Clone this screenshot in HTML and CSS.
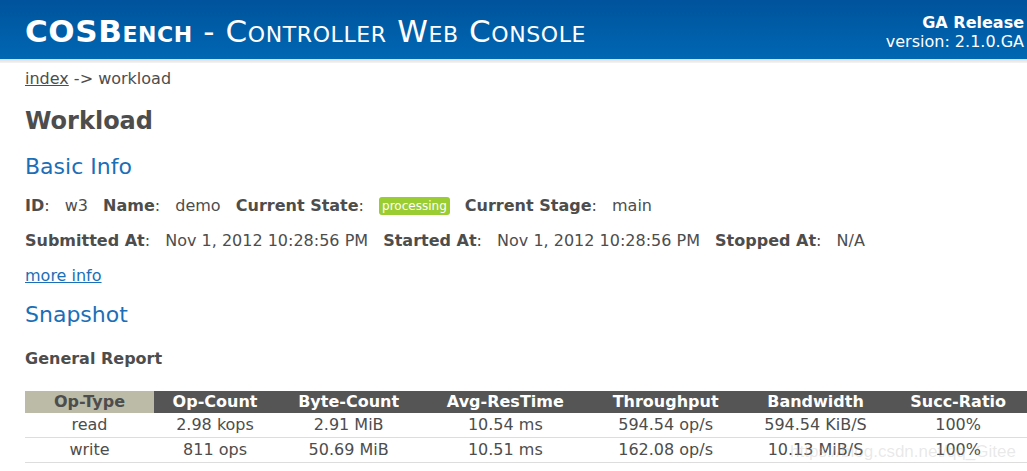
FILE: index.html
```html
<!DOCTYPE html>
<html lang="en">
<head>
  <meta charset="UTF-8">
  <title>COSBench - Controller Web Console</title>
  <link rel="stylesheet" href="styles.css">
</head>
<body>
  <div class="top">
    <div class="title"><span class="brand">COSBench</span> - Controller Web Console</div>
    <div class="release">
      <div class="release-name">GA Release</div>
      <div class="release-ver">version: 2.1.0.GA</div>
    </div>
  </div>
  <div class="top-shadow"></div>
  <div class="content">
    <div class="crumb"><a href="#">index</a> -&gt; workload</div>
    <h1>Workload</h1>
    <h2>Basic Info</h2>
    <div class="info-line">
      <span class="label">ID</span>: <span class="value">w3</span>
      <span class="label">Name</span>: <span class="value">demo</span>
      <span class="label">Current State</span>: <span class="value"><span class="state">processing</span></span>
      <span class="label">Current Stage</span>: <span class="value">main</span>
    </div>
    <div class="info-line">
      <span class="label">Submitted At</span>: <span class="value">Nov 1, 2012 10:28:56 PM</span>
      <span class="label">Started At</span>: <span class="value">Nov 1, 2012 10:28:56 PM</span>
      <span class="label">Stopped At</span>: <span class="value">N/A</span>
    </div>
    <div class="more"><a href="#">more info</a></div>
    <h2 class="snap">Snapshot</h2>
    <h3>General Report</h3>
    <table class="report">
      <thead>
        <tr>
          <th class="first">Op-Type</th>
          <th>Op-Count</th>
          <th>Byte-Count</th>
          <th>Avg-ResTime</th>
          <th>Throughput</th>
          <th>Bandwidth</th>
          <th>Succ-Ratio</th>
        </tr>
      </thead>
      <tbody>
        <tr>
          <td>read</td>
          <td>2.98 kops</td>
          <td>2.91 MiB</td>
          <td>10.54 ms</td>
          <td>594.54 op/s</td>
          <td>594.54 KiB/S</td>
          <td>100%</td>
        </tr>
        <tr>
          <td>write</td>
          <td>811 ops</td>
          <td>50.69 MiB</td>
          <td>10.51 ms</td>
          <td>162.08 op/s</td>
          <td>10.13 MiB/S</td>
          <td>100%</td>
        </tr>
      </tbody>
    </table>
  </div>
  <div class="watermark">https://blog.csdn.net/qq_Gitee</div>
</body>
</html>
```

FILE: styles.css
```css
html, body {
  margin: 0;
  padding: 0;
}
body {
  font-family: 'DejaVu Sans', Verdana, sans-serif;
  font-size: 16px;
  color: #4d4d4d;
  background: #fff;
  overflow: hidden;
  position: relative;
  height: 471px;
}
a {
  color: #4d4d4d;
}
.top {
  height: 59px;
  background: linear-gradient(to bottom, #00539c, #0067b3);
  color: #fff;
  display: flex;
  justify-content: space-between;
  align-items: center;
  padding: 0 3px 0 25px;
}
.title {
  font-size: 31px;
  font-variant: small-caps;
  letter-spacing: 0.6px;
  padding-top: 2px;
}
.title .brand {
  font-weight: bold;
}
.release {
  text-align: right;
  font-size: 16px;
  line-height: 19px;
  padding-top: 5px;
}
.release-name {
  font-weight: bold;
}
.top-shadow {
  height: 4px;
  background: linear-gradient(to bottom, #dcdcdc, #f4f4f4);
}
.content {
  padding: 0 0 0 25px;
}
.crumb {
  margin-top: 5px;
  line-height: 22px;
}
h1 {
  font-size: 24px;
  margin: 16px 0 0 0;
  line-height: 30px;
  color: #4d4d4d;
}
h2 {
  font-size: 22px;
  font-weight: normal;
  color: #1a6fb8;
  margin: 16px 0 0 0;
  line-height: 30px;
}
.info-line {
  line-height: 22px;
  margin-top: 13px;
}
.label {
  font-weight: bold;
}
.value {
  margin: 0 10px 0 10px;
}
.state {
  display: inline-block;
  background: #9acd32;
  color: #fff;
  font-size: 12px;
  line-height: 18px;
  padding: 0 3px;
  border-radius: 3px;
  vertical-align: 1px;
}
.more {
  margin-top: 13px;
  line-height: 22px;
}
.more a {
  color: #1a6fb8;
}
h2.snap {
  margin-top: 13px;
}
h3 {
  font-size: 16px;
  margin: 19px 0 0 0;
  line-height: 20px;
}
.report {
  border-collapse: collapse;
  margin-top: 22px;
  width: 1002px;
  font-size: 16px;
}
.report th {
  background: #555;
  color: #fff;
  font-weight: bold;
  height: 22px;
  padding: 0;
  line-height: 22px;
}
.report th.first {
  background: #bbbba8;
  color: #4d4d4d;
  width: 129px;
}
.report td {
  text-align: center;
  height: 24px;
  padding: 0;
  border-bottom: 1px solid #ddd;
  line-height: 24px;
}
.watermark {
  position: absolute;
  left: 790px;
  top: 442px;
  font-family: 'Liberation Sans', Arial, sans-serif;
  font-size: 17px;
  color: rgba(180, 180, 180, 0.3);
}
```
